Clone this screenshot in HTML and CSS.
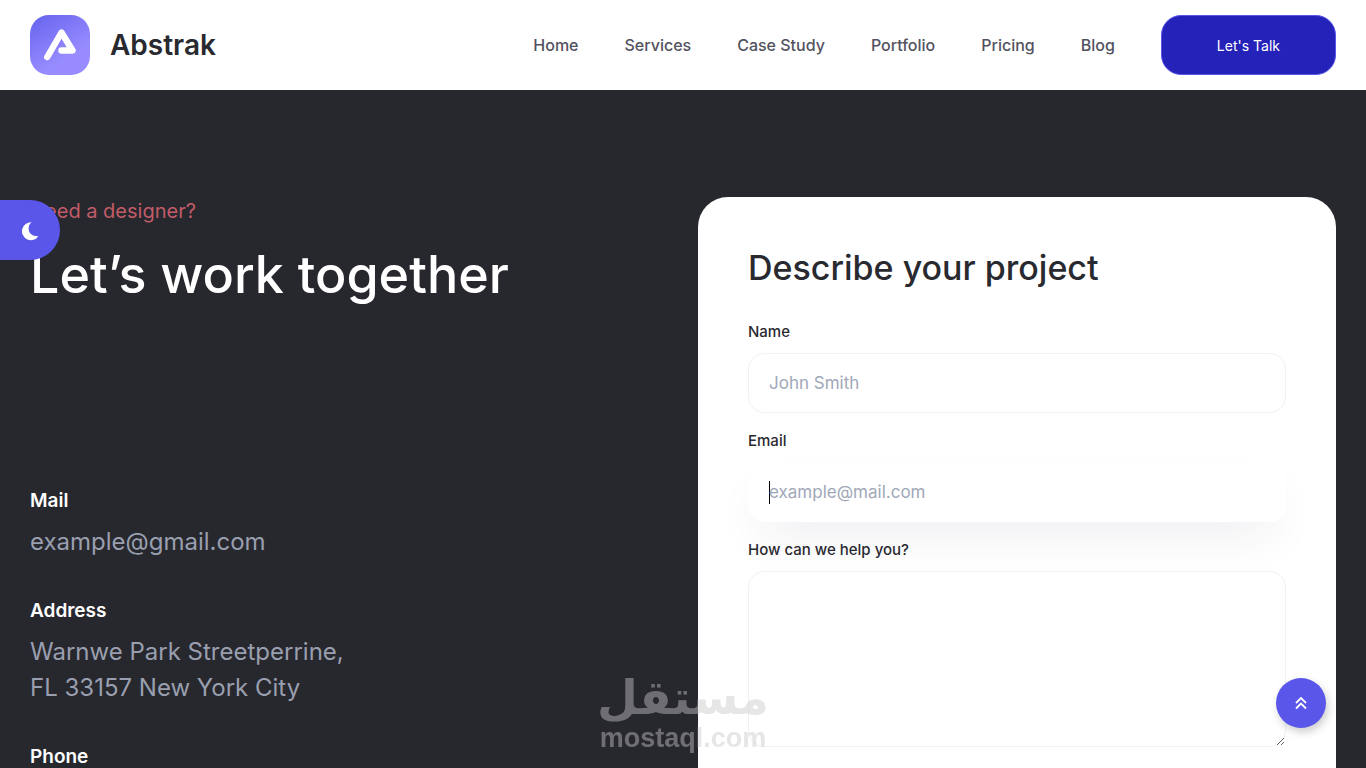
FILE: index.html
```html
<!DOCTYPE html>
<html lang="en">
<head>
<meta charset="utf-8">
<meta name="viewport" content="width=device-width, initial-scale=1">
<title>Abstrak</title>
<link rel="stylesheet" href="styles.css">
</head>
<body>
<header class="site-header">
  <a class="brand" href="#">
    <svg class="brand-mark" viewBox="0 0 60 60" aria-hidden="true">
      <defs>
        <linearGradient id="brand-fill" x1="0.1" y1="0" x2="0.7" y2="1">
          <stop offset="0" stop-color="#6865ee"/>
          <stop offset="0.75" stop-color="#978bff"/>
        </linearGradient>
      </defs>
      <rect width="60" height="60" rx="19" fill="url(#brand-fill)"/>
      <path d="M17.3 42 L31.5 17.5 L42.5 35.5 H31.5" fill="none" stroke="#fff" stroke-width="6.4" stroke-linecap="round" stroke-linejoin="round"/>
    </svg>
    <span class="brand-name">Abstrak</span>
  </a>
  <nav class="main-nav" aria-label="Main">
    <a href="#">Home</a>
    <a href="#">Services</a>
    <a href="#">Case Study</a>
    <a href="#">Portfolio</a>
    <a href="#">Pricing</a>
    <a href="#">Blog</a>
    <button class="talk-button" type="button">Let's Talk</button>
  </nav>
</header>

<button class="theme-toggle" type="button" aria-label="Toggle dark mode">
  <svg width="20" height="22" viewBox="0 0 20 22" aria-hidden="true">
    <path d="M11.6 3.2 A9 9 0 1 0 18.4 17.2 Q9 17.6 8.6 9.8 Q8.5 5.6 11.6 3.2Z" fill="#fff"/>
  </svg>
</button>

<main class="contact">
  <section class="intro">
    <p class="eyebrow">Need a designer?</p>
    <h1 class="headline">Let’s work together</h1>
    <div class="details">
      <div class="detail">
        <h2>Mail</h2>
        <p><a href="mailto:example@gmail.com">example@gmail.com</a></p>
      </div>
      <div class="detail">
        <h2>Address</h2>
        <p>Warnwe Park Streetperrine,<br>FL 33157 New York City</p>
      </div>
      <div class="detail">
        <h2>Phone</h2>
      </div>
    </div>
  </section>

  <form class="project-form">
    <h2 class="form-title">Describe your project</h2>
    <div class="field">
      <label for="name">Name</label>
      <input id="name" type="text" placeholder="John Smith">
    </div>
    <div class="field">
      <label for="email">Email</label>
      <input id="email" type="email" placeholder="example@mail.com" autofocus>
    </div>
    <div class="field">
      <label for="message">How can we help you?</label>
      <textarea id="message"></textarea>
    </div>
  </form>
</main>

<div class="watermark">
  <span class="watermark-arabic" lang="ar" dir="rtl">مستقل</span>
  <span class="watermark-latin">mostaql.com</span>
</div>

<button class="to-top" type="button" aria-label="Back to top">
  <svg width="12" height="14" viewBox="0 0 12 14" fill="none" stroke="#fff" stroke-width="1.8" aria-hidden="true">
    <path d="M1 7 L6 2 L11 7 M1 12.5 L6 7.5 L11 12.5"/>
  </svg>
</button>
</body>
</html>
```
FILE: styles.css
```css
* {
  box-sizing: border-box;
}

body {
  margin: 0;
  background: #27272e;
  color: #292930;
  font-family: Inter, "Open Sans", sans-serif;
}

h1, h2, p {
  margin: 0;
}

a {
  color: inherit;
  text-decoration: none;
}

button, input, textarea {
  font: inherit;
}

button {
  border: 0;
  padding: 0;
  cursor: pointer;
}

.site-header {
  position: sticky;
  top: 0;
  z-index: 3;
  display: flex;
  align-items: center;
  justify-content: space-between;
  padding: 15px 30px;
  background: #fff;
}

.brand {
  display: flex;
  align-items: center;
  gap: 20px;
}

.brand-mark {
  width: 60px;
  height: 60px;
}

.brand-name {
  font-size: 28px;
  font-weight: 600;
}

.main-nav {
  display: flex;
  align-items: center;
  gap: 46px;
  color: #525260;
  font-size: 16px;
  font-weight: 500;
}

.talk-button {
  height: 60px;
  padding: 0 55px;
  border: 1px solid #5956e9;
  border-radius: 20px;
  background: #2522ba;
  color: #fff;
  font-size: 14px;
  font-weight: 400;
}

.theme-toggle {
  position: fixed;
  top: 200px;
  left: 0;
  z-index: 2;
  display: flex;
  align-items: center;
  justify-content: center;
  width: 60px;
  height: 60px;
  border-radius: 0 30px 30px 0;
  background: #5956e9;
}

.contact {
  display: grid;
  grid-template-columns: 1fr 1fr;
  gap: 30px;
  padding: 107px 30px 0;
}

.eyebrow {
  color: #c15c68;
  font-size: 20px;
  font-weight: 400;
  line-height: 28px;
}

.headline {
  margin-top: 14px;
  color: #fff;
  font-size: 52px;
  font-weight: 500;
  line-height: 72px;
}

.details {
  display: grid;
  gap: 36px;
  margin-top: 175px;
}

.detail h2 {
  color: #fff;
  font-size: 19px;
  font-weight: 600;
  line-height: 30px;
}

.detail p {
  margin-top: 8px;
  color: #999fae;
  font-size: 24px;
  line-height: 36px;
}

.project-form {
  padding: 50px;
  border-radius: 30px;
  background: #fff;
}

.form-title {
  margin-bottom: 32px;
  font-size: 34px;
  font-weight: 500;
  line-height: 42px;
}

.field {
  display: grid;
  gap: 10px;
  margin-bottom: 17px;
}

.field label {
  position: relative;
  z-index: 1;
  font-size: 15px;
  font-weight: 500;
  line-height: 22px;
}

.field input,
.field textarea {
  width: 100%;
  height: 60px;
  padding: 0 20px;
  border: 1px solid #ecf2f6;
  border-radius: 16px;
  outline: none;
  background: #fff;
  color: #292930;
  font-size: 17px;
}

.field textarea {
  height: 176px;
  padding: 15px 20px;
  background: transparent;
  resize: vertical;
}

.field input:focus {
  border-color: transparent;
  box-shadow: 0 22px 48px -14px rgba(41, 41, 80, 0.1);
  caret-color: #000;
}

/* Steady caret while the field is empty. */
.field input:focus:placeholder-shown {
  background: linear-gradient(#000, #000) 20px center / 1px 23px no-repeat #fff;
  caret-color: transparent;
}

.field ::placeholder {
  color: #9fa8b8;
  font-weight: 400;
  opacity: 1;
}

.watermark {
  position: fixed;
  bottom: 14px;
  left: 50%;
  z-index: 1;
  display: grid;
  justify-items: center;
  transform: translateX(-50%);
  color: #c8c8c8;
  font-weight: 700;
  opacity: 0.45;
  pointer-events: none;
}

.watermark-arabic {
  font-family: "DejaVu Sans", sans-serif;
  font-size: 47px;
  line-height: 48px;
}

.watermark-latin {
  font-family: "Liberation Sans", Arial, sans-serif;
  font-size: 27px;
  line-height: 32px;
}

.to-top {
  position: fixed;
  right: 40px;
  bottom: 40px;
  z-index: 2;
  display: flex;
  align-items: center;
  justify-content: center;
  width: 50px;
  height: 50px;
  border-radius: 50%;
  background: #5956e9;
  box-shadow: 2px 4px 8px rgba(0, 0, 0, 0.2);
}
```
